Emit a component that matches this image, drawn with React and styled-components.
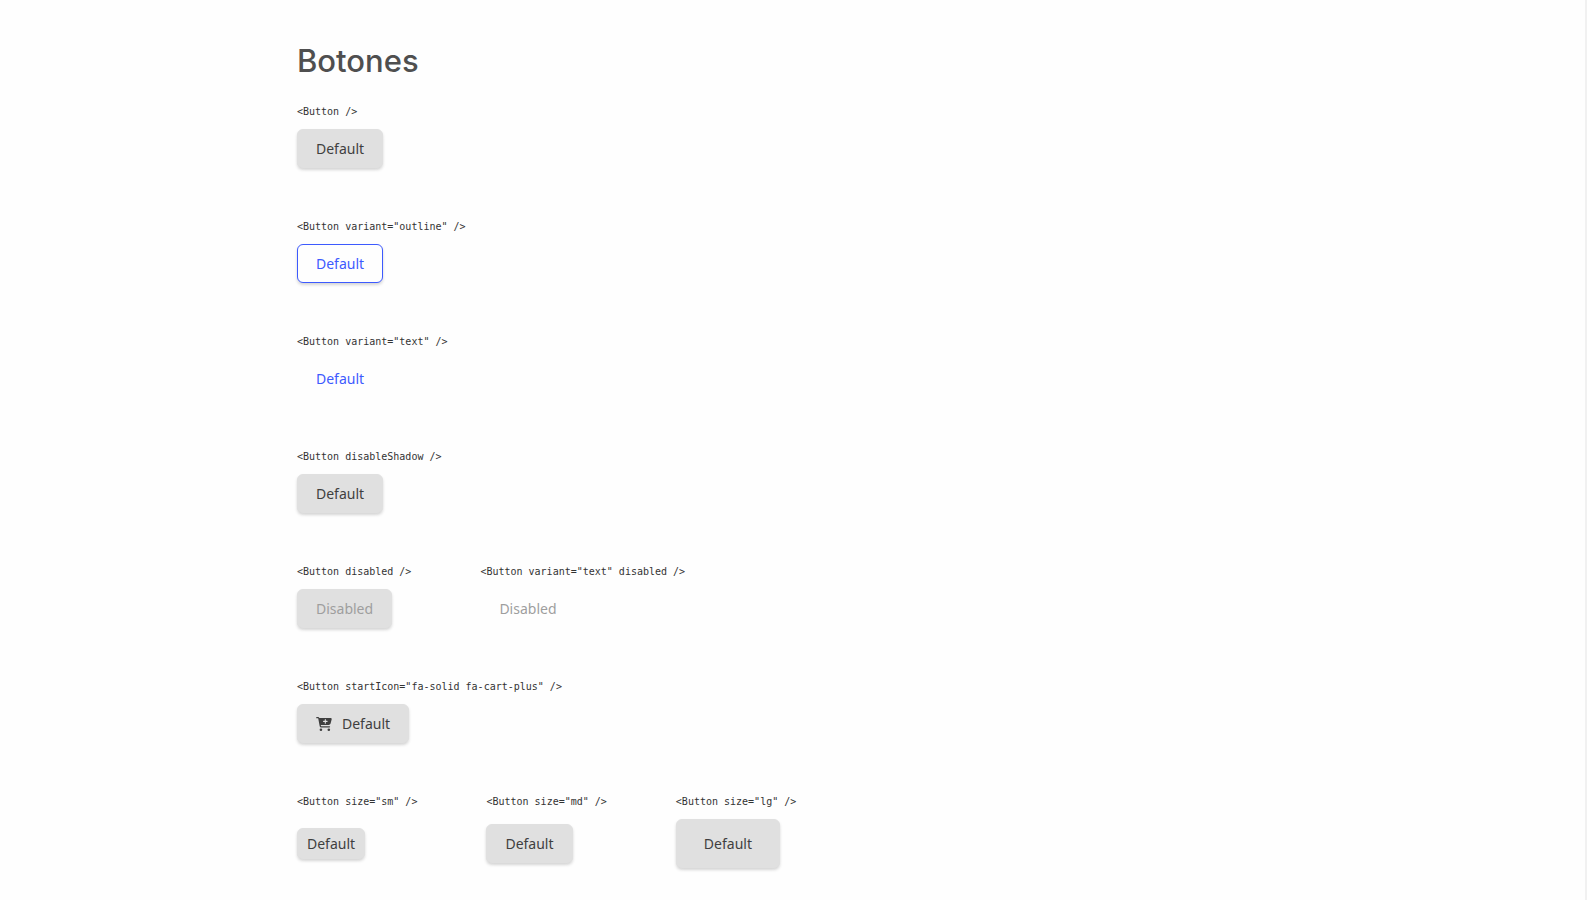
import React from "react";
import styled, { createGlobalStyle, css } from "styled-components";

const GlobalStyle = createGlobalStyle`
  * { box-sizing: border-box; }
  body {
    margin: 0;
    background: #fefefe;
    color: #3f3f3f;
    font-family: "Noto Sans", sans-serif;
  }
`;

const Page = styled.main`
  display: flex;
  flex-direction: column;
  min-height: 100vh;
  padding: 38px 60px 30px 297px;
  border-right: 2px solid #f1f1f1;
`;

const Title = styled.h1`
  margin: 0 0 19px;
  color: #4f4f4f;
  font-family: Inter, sans-serif;
  font-size: 31px;
  font-weight: 500;
  line-height: 45px;
`;

const Examples = styled.div`
  display: flex;
  flex-direction: column;
  gap: 49px;
`;

const Row = styled.section`
  display: flex;
  gap: 69px;
`;

const Example = styled.div`
  display: flex;
  flex-direction: column;
  gap: 7px;
`;

const Code = styled.code`
  color: #333;
  font-family: "DejaVu Sans Mono", monospace;
  font-size: 10px;
  line-height: 20px;
  white-space: nowrap;
`;

const Control = styled.div`
  display: flex;
  flex: 1;
  align-items: center;
`;

const paddings = { sm: "5px 9px", md: "9px 18px", lg: "14px 27px" };

const variants = {
  default: css`
    background: #e0e0e0;
    border-color: #e0e0e0;
    box-shadow: 0 2px 3px rgba(51, 51, 51, 0.2);
  `,
  outline: css`
    background: #fefefe;
    border-color: #3d5afe;
    color: #3d5afe;
    box-shadow: 0 2px 3px rgba(51, 51, 51, 0.2);
  `,
  text: css`
    background: transparent;
    border-color: transparent;
    color: #3d5afe;
  `,
};

const Button = styled.button`
  display: inline-flex;
  align-items: center;
  gap: 10px;
  padding: ${({ $size = "md" }) => paddings[$size]};
  border: 1px solid;
  border-radius: 6px;
  color: #3f3f3f;
  font-family: inherit;
  font-size: 14px;
  font-weight: 400;
  line-height: 19px;
  cursor: pointer;
  ${({ $variant = "default" }) => variants[$variant]}

  &:disabled {
    color: #9e9e9e;
    cursor: default;
  }
`;

const Icon = styled.svg`
  width: 16px;
  height: 14px;
  fill: currentColor;
`;

const CartPlus = () => (
  <Icon viewBox="0 0 576 512" aria-hidden="true">
    <path d="M0 24C0 10.700 10.700 0 24 0h45.500c22 0 41.500 12.800 50.600 32h411c26.300 0 45.500 25 38.600 50.400l-41 152.300c-8.500 31.400-37 53.300-69.500 53.300H170.700l5.400 28.500c2.200 11.300 12.100 19.500 23.600 19.500H488c13.300 0 24 10.700 24 24s-10.700 24-24 24H199.700c-34.600 0-64.300-24.600-70.700-58.500L77.400 54.500c-.7-3.800-4-6.500-7.900-6.500H24C10.700 48 0 37.300 0 24zm128 440a48 48 0 1 1 96 0 48 48 0 1 1-96 0zm336-48a48 48 0 1 1 0 96 48 48 0 1 1 0-96zM252 160c0 11 9 20 20 20h44v44c0 11 9 20 20 20s20-9 20-20v-44h44c11 0 20-9 20-20s-9-20-20-20h-44V96c0-11-9-20-20-20s-20 9-20 20v44h-44c-11 0-20 9-20 20z" />
  </Icon>
);

const rows = [
  [{ code: "<Button />" }],
  [{ code: '<Button variant="outline" />', variant: "outline" }],
  [{ code: '<Button variant="text" />', variant: "text" }],
  [{ code: "<Button disableShadow />" }],
  [
    { code: "<Button disabled />", disabled: true },
    { code: '<Button variant="text" disabled />', variant: "text", disabled: true },
  ],
  [{ code: '<Button startIcon="fa-solid fa-cart-plus" />', icon: true }],
  [
    { code: '<Button size="sm" />', size: "sm" },
    { code: '<Button size="md" />', size: "md" },
    { code: '<Button size="lg" />', size: "lg" },
  ],
];

export default function App() {
  return (
    <>
      <GlobalStyle />
      <Page>
        <Title>Botones</Title>
        <Examples>
          {rows.map((row) => (
            <Row key={row[0].code}>
              {row.map(({ code, variant, size, disabled, icon }) => (
                <Example key={code}>
                  <Code>{code}</Code>
                  <Control>
                    <Button type="button" $variant={variant} $size={size} disabled={disabled}>
                      {icon && <CartPlus />}
                      {disabled ? "Disabled" : "Default"}
                    </Button>
                  </Control>
                </Example>
              ))}
            </Row>
          ))}
        </Examples>
      </Page>
    </>
  );
}
